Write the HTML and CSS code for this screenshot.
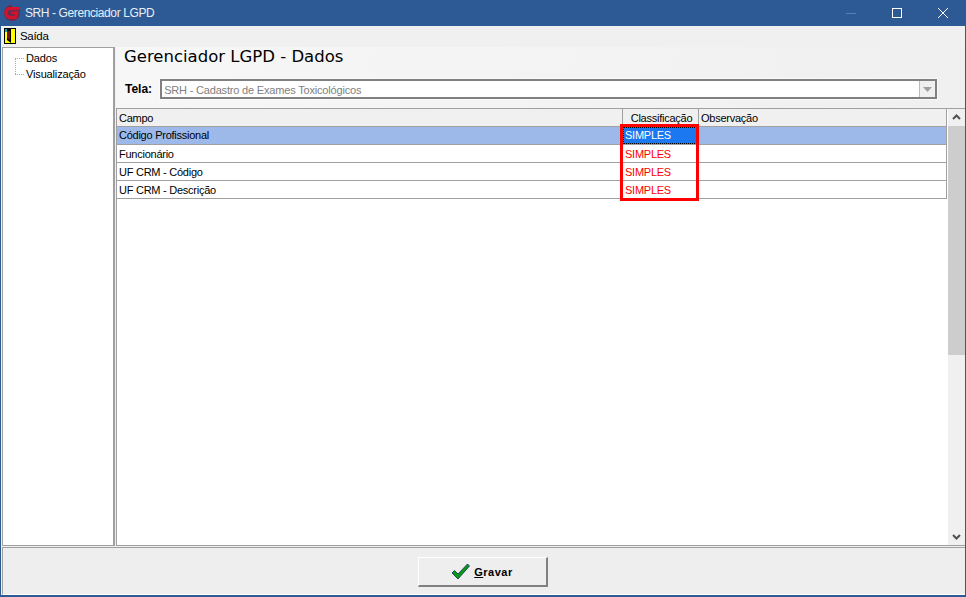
FILE: index.html
```html
<!DOCTYPE html>
<html lang="pt">
<head>
<meta charset="utf-8">
<title>SRH - Gerenciador LGPD</title>
<link rel="stylesheet" href="styles.css">
</head>
<body>
<div class="window">
  <header class="titlebar">
    <svg class="logo" width="18" height="18" viewBox="0 0 18 18"><path d="M9 1A8 8 0 1 0 9 17A8 8 0 0 0 17 9V5H9C6 5 4.500 7 4.500 9C4.500 11.500 6.500 13 9 13H12.500L13.500 8.500H8L7.500 10.500H10.800" fill="#6e2a4a"/><path d="M17 3H8C4 3 1.500 5.500 1.500 9C1.500 12.500 4 15 8 15H13.500L15.500 7.500H8.500L7.800 10H11.800L11.300 12H8C5.800 12 4.600 10.700 4.600 9C4.600 7.200 5.800 6 8 6H16Z" fill="#d3122f"/></svg>
    <span class="title">SRH - Gerenciador LGPD</span>
    <div class="winbtns">
      <svg class="winbtn" width="46" height="26" viewBox="0 0 46 26"><path d="M18 13.500H28" stroke="#5a7fb0" fill="none"/></svg>
      <svg class="winbtn" width="46" height="26" viewBox="0 0 46 26"><rect x="18.500" y="8.500" width="9" height="9" stroke="#fff" fill="none"/></svg>
      <svg class="winbtn" width="46" height="26" viewBox="0 0 46 26"><path d="M18 8L28 18M28 8L18 18" stroke="#fff" fill="none"/></svg>
    </div>
  </header>
  <nav class="menubar">
    <svg class="exit-icon" width="12" height="16" viewBox="0 0 12 16"><rect width="12" height="16" fill="#000"/><rect x="1" y="1" width="10" height="14" fill="#ff0"/><rect x="1" y="1" width="2" height="3" fill="#1aa"/><path d="M3 1H7V15L3 12Z" fill="#000"/><path d="M3 3H6V12L3 10Z" fill="#7a1010"/></svg>
    <span class="menu-label">Saída</span>
  </nav>
  <div class="content">
    <aside class="tree">
      <div class="tree-item">Dados</div>
      <div class="tree-item">Visualização</div>
    </aside>
    <main class="main">
      <div class="top">
        <h1 class="heading">Gerenciador LGPD - Dados</h1>
        <div class="screen-row">
          <label class="screen-label">Tela:</label>
          <div class="combo">
            <span class="combo-text">SRH - Cadastro de Exames Toxicológicos</span>
            <span class="combo-btn"><svg width="9" height="5" viewBox="0 0 9 5"><path d="M0 0H9L4.500 5Z" fill="#a0a0a0"/></svg></span>
          </div>
        </div>
      </div>
      <section class="grid-wrap">
        <div class="grid">
          <div class="row head">
            <div class="cell c1">Campo</div>
            <div class="cell c2 center">Classificação</div>
            <div class="cell c3">Observação</div>
          </div>
          <div class="row selected">
            <div class="cell c1">Código Profissional</div>
            <div class="cell c2 active">SIMPLES</div>
            <div class="cell c3"></div>
          </div>
          <div class="row">
            <div class="cell c1">Funcionário</div>
            <div class="cell c2 red">SIMPLES</div>
            <div class="cell c3"></div>
          </div>
          <div class="row">
            <div class="cell c1">UF CRM - Código</div>
            <div class="cell c2 red">SIMPLES</div>
            <div class="cell c3"></div>
          </div>
          <div class="row">
            <div class="cell c1">UF CRM - Descrição</div>
            <div class="cell c2 red">SIMPLES</div>
            <div class="cell c3"></div>
          </div>
          <div class="highlight"></div>
        </div>
        <div class="scrollbar">
          <svg class="arrow" width="17" height="17" viewBox="0 0 17 17"><path d="M5 10L8.500 6.500L12 10" stroke="#505050" stroke-width="2" fill="none"/></svg>
          <div class="thumb"></div>
          <div class="track"></div>
          <svg class="arrow" width="17" height="17" viewBox="0 0 17 17"><path d="M5 7L8.500 10.500L12 7" stroke="#505050" stroke-width="2" fill="none"/></svg>
        </div>
      </section>
    </main>
  </div>
  <footer class="footer">
    <button class="save" type="button">
      <svg width="19" height="17" viewBox="0 0 19 17"><path d="M1 10L3.500 7.500L7 11L16.500 1L18.500 3L7 16Z" fill="#0b9a0b" stroke="#0a2a6a" stroke-width=".8"/></svg>
      <span><u>G</u>ravar</span>
    </button>
  </footer>
</div>
</body>
</html>
```
FILE: styles.css
```css
* { box-sizing: border-box; }
html, body { margin: 0; height: 100%; }
body { font-family: "Liberation Sans", Arial, sans-serif; font-size: 11px; color: #000; overflow: hidden; }
.window { width: 966px; height: 597px; display: flex; flex-direction: column; background: #f0f0f0; border: solid #2d5a94; border-width: 0 1px 2px 1px; }
.titlebar { height: 26px; margin: 0 -1px; background: #2d5a94; display: flex; align-items: center; color: #fff; flex: none; }
.logo { margin-left: 3px; }
.title { margin-left: 4px; font-size: 12px; letter-spacing: -.4px; color: #e8eef6; }
.winbtns { margin-left: auto; display: flex; }
.winbtn { display: block; }
.menubar { height: 19px; flex: none; display: flex; align-items: center; padding-left: 3px; gap: 4px; }
.menu-label { font-size: 11.500px; letter-spacing: -.3px; }
.content { flex: 1; display: flex; min-height: 0; padding: 2px 0 0 1px; gap: 1px; }
.tree { width: 113px; background: #fff; border: 1px solid #a0a0a0; border-right-width: 2px; padding: 3px 0 0 10px; }
.tree-item { height: 16px; padding-left: 13px; line-height: 14px; position: relative; letter-spacing: -.15px; }
.tree-item::before { content: ""; position: absolute; left: 2px; top: 7px; width: 9px; border-top: 1px dotted #aaa; }
.tree-item:first-child::after { content: ""; position: absolute; left: 2px; top: 7px; height: 16px; border-left: 1px dotted #aaa; }
.main { flex: 1; display: flex; flex-direction: column; min-width: 0; background: linear-gradient(100deg, #f7f7f7, #efefef); }
.top { height: 61px; flex: none; padding: 0 0 0 8px; }
.heading { margin: 0; font-size: 16.500px; font-weight: 400; line-height: 20px; font-family: "DejaVu Sans", sans-serif; }
.screen-row { display: flex; align-items: center; margin-top: 12px; gap: 8px; padding-left: 1px; }
.screen-label { font-weight: 700; font-size: 12px; }
.combo { width: 777px; height: 20px; display: flex; background: #fff; border: 2px solid #808080; align-items: stretch; box-shadow: 0 0 0 1px #fafafa; }
.combo-text { flex: 1; padding: 1px 0 0 2px; line-height: 16px; color: #808080; letter-spacing: -.18px; }
.combo-btn { width: 16px; background: #f0f0f0; display: flex; align-items: center; justify-content: center; border-left: 1px solid #bbb; }
.grid-wrap { flex: 1; display: flex; min-height: 0; border: solid #a0a0a0; border-width: 1px 0 1px 1px; background: #fff; }
.grid { flex: 1; min-width: 0; position: relative; }
.row { display: flex; height: 18px; border-bottom: 1px solid #a0a0a0; width: 830px; background: #fff; }
.head { background: #f0f0f0; }
.cell { padding: 1px 0 0 2px; line-height: 17px; border-right: 1px solid #a0a0a0; overflow: hidden; white-space: nowrap; letter-spacing: -.25px; }
.c1 { width: 506px; }
.c2 { width: 76px; }
.c3 { flex: 1; }
.center { text-align: center; }
.selected { background: #9db9ea; }
.selected .cell { padding-top: 0; }
.active { background: #1c78f0; color: #fff; outline: 1px dotted #000; outline-offset: -1px; }
.red { color: #f00; }
.highlight { position: absolute; left: 503px; top: 15px; width: 79px; height: 77px; border: 3px solid #f00; pointer-events: none; }
.scrollbar { width: 17px; flex: none; background: #f0f0f0; display: flex; flex-direction: column; }
.arrow { display: block; flex: none; }
.thumb { height: 229px; background: #cdcdcd; flex: none; }
.track { flex: 1; }
.footer { height: 48px; flex: none; margin: 1px 0 0 1px; border: solid #a0a0a0; border-width: 1px 0 0 1px; border-bottom: 1px solid #fff; display: flex; justify-content: center; align-items: center; padding: 2px 3px 0 0; background: #eeeeee; }
.save { width: 130px; height: 30px; background: #eeeeee; border: solid; border-color: #fff #808080 #808080 #fff; border-width: 1px 2px 2px 1px; display: flex; align-items: center; justify-content: center; gap: 4px; font: 700 11px "Liberation Sans", Arial, sans-serif; letter-spacing: .5px; padding: 0; }
```
